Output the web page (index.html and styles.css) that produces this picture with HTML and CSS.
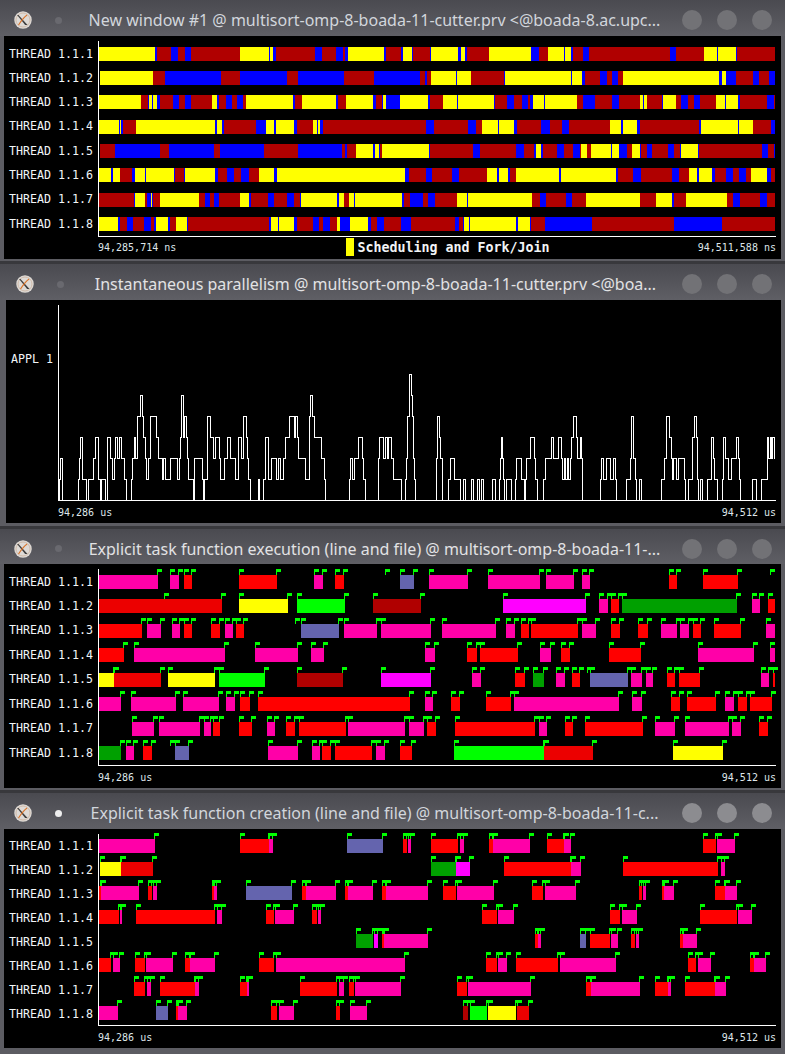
FILE: index.html
```html
<!doctype html>
<html lang="en">

<head>
    <meta charset="utf-8">
    <title>Paraver timelines</title>
    <link rel="stylesheet" href="styles.css">
</head>

<body>

    <section class="window win-first">
        <header class="titlebar">
            <svg class="x-icon" viewBox="0 0 20 20"><circle cx="10" cy="10" r="9.7" fill="#dedad6"/><circle cx="10" cy="10" r="7.8" fill="none" stroke="#cdb5a4" stroke-width="1"/><path d="M5 4.5 L15 15.5 H12.4 L3.4 4.5 Z" fill="#3d3d3d"/><path d="M14.5 4.5 C11 7 8 11 5 15.5" fill="none" stroke="#d9762e" stroke-width="1.3"/></svg>
            <span class="dot"></span>
            <h1 class="title">New window #1 @ multisort-omp-8-boada-11-cutter.prv &lt;@boada-8.ac.upc...</h1>
            <div class="buttons"><span></span><span></span><span></span></div>
        </header>
        <div class="canvas">
            <div class="labels">
                <span>THREAD 1.1.1</span><span>THREAD 1.1.2</span><span>THREAD 1.1.3</span><span>THREAD 1.1.4</span>
                <span>THREAD 1.1.5</span><span>THREAD 1.1.6</span><span>THREAD 1.1.7</span><span>THREAD 1.1.8</span>
            </div>
            <svg class="plot" id="states" width="683" height="201"></svg>
            <div class="axis-text">
                <span>94,285,714 ns</span>
                <span class="legend"><i></i><b>Scheduling and Fork/Join</b></span>
                <span>94,511,588 ns</span>
            </div>
        </div>
    </section>

    <section class="window win-second">
        <header class="titlebar">
            <svg class="x-icon" viewBox="0 0 20 20"><circle cx="10" cy="10" r="9.7" fill="#dedad6"/><circle cx="10" cy="10" r="7.8" fill="none" stroke="#cdb5a4" stroke-width="1"/><path d="M5 4.5 L15 15.5 H12.4 L3.4 4.5 Z" fill="#3d3d3d"/><path d="M14.5 4.5 C11 7 8 11 5 15.5" fill="none" stroke="#d9762e" stroke-width="1.3"/></svg>
            <span class="dot"></span>
            <h1 class="title">Instantaneous parallelism @ multisort-omp-8-boada-11-cutter.prv &lt;@boa...</h1>
            <div class="buttons"><span></span><span></span><span></span></div>
        </header>
        <div class="canvas canvas-appl">
            <div class="labels labels-appl"><span>APPL 1</span></div>
            <svg class="plot" id="parallelism" width="723" height="201"></svg>
            <div class="axis-text">
                <span>94,286 us</span>
                <span>94,512 us</span>
            </div>
        </div>
    </section>

    <section class="window win-third">
        <header class="titlebar">
            <svg class="x-icon" viewBox="0 0 20 20"><circle cx="10" cy="10" r="9.7" fill="#dedad6"/><circle cx="10" cy="10" r="7.8" fill="none" stroke="#cdb5a4" stroke-width="1"/><path d="M5 4.5 L15 15.5 H12.4 L3.4 4.5 Z" fill="#3d3d3d"/><path d="M14.5 4.5 C11 7 8 11 5 15.5" fill="none" stroke="#d9762e" stroke-width="1.3"/></svg>
            <span class="dot"></span>
            <h1 class="title">Explicit task function execution (line and file) @ multisort-omp-8-boada-11-...</h1>
            <div class="buttons"><span></span><span></span><span></span></div>
        </header>
        <div class="canvas">
            <div class="labels labels-wide">
                <span>THREAD 1.1.1</span><span>THREAD 1.1.2</span><span>THREAD 1.1.3</span><span>THREAD 1.1.4</span>
                <span>THREAD 1.1.5</span><span>THREAD 1.1.6</span><span>THREAD 1.1.7</span><span>THREAD 1.1.8</span>
            </div>
            <svg class="plot" id="execution" width="683" height="202"></svg>
            <div class="axis-text">
                <span>94,286 us</span>
                <span>94,512 us</span>
            </div>
        </div>
    </section>

    <section class="window win-fourth">
        <header class="titlebar">
            <svg class="x-icon" viewBox="0 0 20 20"><circle cx="10" cy="10" r="9.7" fill="#dedad6"/><circle cx="10" cy="10" r="7.8" fill="none" stroke="#cdb5a4" stroke-width="1"/><path d="M5 4.5 L15 15.5 H12.4 L3.4 4.5 Z" fill="#3d3d3d"/><path d="M14.5 4.5 C11 7 8 11 5 15.5" fill="none" stroke="#d9762e" stroke-width="1.3"/></svg>
            <span class="dot"></span>
            <h1 class="title">Explicit task function creation (line and file) @ multisort-omp-8-boada-11-c...</h1>
            <div class="buttons"><span></span><span></span><span></span></div>
        </header>
        <div class="canvas">
            <div class="labels labels-tight">
                <span>THREAD 1.1.1</span><span>THREAD 1.1.2</span><span>THREAD 1.1.3</span><span>THREAD 1.1.4</span>
                <span>THREAD 1.1.5</span><span>THREAD 1.1.6</span><span>THREAD 1.1.7</span><span>THREAD 1.1.8</span>
            </div>
            <svg class="plot" id="creation" width="683" height="197"></svg>
            <div class="axis-text">
                <span>94,286 us</span>
                <span>94,512 us</span>
            </div>
        </div>
    </section>

    <script src="script.js"></script>

</body>

</html>
```

FILE: styles.css
```css
body {
    display: flex;
    flex-direction: column;
    gap: 3px;
    height: 1054px;
    margin: 0;
    overflow: hidden;
    background-color: #38383c;
    font-family: "DejaVu Sans Mono", monospace;
}

.window {
    display: flex;
    flex-direction: column;
    background-color: #5c5c62;
}

.win-first {
    height: 261px;
}

.win-second {
    height: 262px;
}

.win-third {
    height: 261px;
}

.win-fourth {
    height: 261px;
}

.titlebar {
    display: flex;
    align-items: center;
    flex: none;
    height: 36px;
    box-sizing: border-box;
    padding: 4px 13px 0 14px;
    background: linear-gradient(#4a4a50, #5f5f65);
}

.win-second .titlebar {
    padding-left: 16px;
}

.win-third .titlebar {
    height: 35px;
}

.x-icon {
    width: 18px;
    height: 18px;
    flex: none;
}

.dot {
    flex: none;
    width: 7px;
    height: 7px;
    margin-left: 23px;
    border-radius: 50%;
    background-color: #69696f;
}

.win-fourth .dot {
    background-color: #eeeeee;
}

.title {
    flex: 1;
    margin: 0 0 0 5px;
    overflow: hidden;
    font-family: "Noto Sans", sans-serif;
    font-size: 16px;
    font-weight: 400;
    line-height: 22px;
    color: #e2e2e4;
    text-align: center;
    white-space: nowrap;
}

.win-first .title,
.win-fourth .title {
    color: #d2d6dc;
}

.buttons {
    display: flex;
    gap: 15px;
    flex: none;
}

.buttons span {
    width: 20px;
    height: 20px;
    border-radius: 50%;
    background-color: #727276;
}

.win-fourth .buttons span {
    background-color: #8c8c90;
}

.canvas {
    display: grid;
    grid-template-columns: 94px 1fr;
    grid-template-rows: auto 22px;
    margin: 0 4px;
    background-color: #000;
    color: #f2f6f8;
}

.canvas-appl {
    grid-template-columns: 52px 1fr;
    margin-left: 6px;
}

.labels {
    display: flex;
    flex-direction: column;
    padding: 5.5px 0 0 5px;
    font-size: 11.65px;
    line-height: 24.29px;
    white-space: nowrap;
}

.labels-wide {
    line-height: 24.43px;
}

.labels-tight {
    padding-top: 5px;
    line-height: 24px;
}

.labels-appl {
    padding-top: 47px;
}

.plot {
    display: block;
    shape-rendering: crispEdges;
}

.axis-text {
    display: flex;
    align-items: center;
    justify-content: space-between;
    grid-column: 2;
    padding-right: 5px;
    font-size: 10px;
    color: #dfe6ea;
}

.win-first .axis-text {
    padding-bottom: 2px;
}

.legend {
    display: flex;
    align-items: center;
    gap: 3px;
    margin-left: 22px;
    font-size: 13.3px;
    color: #f2f4f6;
}

.legend i {
    display: block;
    width: 8px;
    height: 18px;
    background-color: #ffff00;
}
```

FILE: script.js
```js
// trace data is in 1/3 px page coordinates, read off the timelines
var colors = {
    Y: '#ffff00', R: '#b00000', B: '#0000ff',
    p: '#ff00a8', r: '#ff0000', d: '#ec0000',
    g: '#00ff00', G: '#00a000', s: '#6464ae', M: '#ff00ff'
};

var stateRows = [
    'Y297 B465 R471 B513 R534 B555 R573 Y720 B807 Y810 B819 R828 B945 R966 B1008 R1029 B1035 Y1044 B1152 R1158 B1203 Y1209 B1236 R1239 B1290 Y1293 B1374 Y1383 B1395 R1401 Y1467 B1593 R1617 Y1644 B1692 Y1695 B1713 R1719 B1749 R1767 B2010 R2028 Y2112 B2151 Y2154 B2208 R2211',
    'Y300 R459 B495 R663 B720 R861 B894 R1032 B1122 R1260 B1275 R1281 Y1293 B1368 Y1371 R1413 B1512 Y1515 B1713 Y1716 B1746 R1755 B1800 R1821 B1836 R1854 Y1869 B2157 Y2166 B2178 R2208 B2259 R2277 B2307',
    'Y297 R423 B444 Y447 B456 Y459 B471 R480 B519 R537 B555 R573 Y636 B651 R657 B678 R696 B711 R729 Y738 B879 R885 Y906 B1008 R1014 Y1038 B1119 R1128 B1146 Y1149 B1158 Y1200 B1284 R1290 Y1329 B1371 Y1374 B1482 R1485 B1521 R1542 B1566 R1584 B1590 Y1599 B1632 Y1635 R1731 B1749 R1785 B1836 R1857 Y1920 B1929 Y1933 R1941 B1986 Y1989 R2027 B2043 R2064 B2082 R2100 Y2148 B2175 Y2178 B2214 R2220 B2301 R2322',
    'Y297 B357 Y360 B363 R369 Y408 B645 Y651 B666 R672 B768 Y798 B822 Y828 B882 R891 Y939 B951 Y954 B960 R969 B1278 R1302 B1404 R1428 Y1446 B1494 Y1497 B1542 R1551 B1623 R1650 B1686 R1707 Y1830 B1863 Y1869 B1911 R1920 B2097 Y2103 B2214 Y2217 R2259 B2313',
    'R300 B345 R480 B507 R642 B660 R792 B894 R1026 B1035 R1041 Y1068 B1119 Y1125 B1137 R1140 Y1146 B1287 R1290 B1419 R1440 B1548 R1572 B1602 Y1608 B1623 R1629 B1671 R1692 B1719 R1740 Y1743 R1761 Y1773 B1833 Y1836 B1857 R1881 Y1896 B1920 R1923 B1941 R1956 B2004 R2022 B2040 Y2043 B2094 R2097 B2286 R2304 B2322',
    'Y297 B333 Y339 R360 B396 Y405 B435 Y438 B522 R525 B552 Y555 B645 R654 B681 R702 B723 R747 Y777 B822 Y831 B1215 R1227 B1278 R1296 B1356 R1377 Y1461 B1491 Y1497 B1524 R1530 Y1548 B1677 Y1683 B1848 R1854 B1899 R1923 B2016 R2037 Y2067 B2091 Y2097 B2136 R2145 B2178 R2199 B2217 R2238 Y2253 B2301 R2313',
    'R297 B402 Y405 R435 B441 Y453 B456 R459 Y480 R597 B615 R630 B642 R657 Y720 B747 R753 B804 R822 B861 R882 B900 Y903 B1011 Y1017 R1032 Y1047 B1062 Y1065 B1206 R1212 B1230 R1269 B1284 R1305 Y1370 B1401 Y1404 R1596 B1620 R1638 B1698 R1716 Y1758 R1920 Y1968 B2016 R2022 Y2058 R2181 B2199 R2220 B2280 R2301',
    'Y297 B354 R360 B381 R399 B432 R453 B462 Y468 B504 R510 Y528 B561 R564 B807 Y813 B834 Y837 B882 R891 B939 R957 B969 R990 Y1011 B1020 Y1050 B1104 R1113 B1131 R1152 B1203 R1233 B1365 R1377 B1389 Y1392 B1407 Y1410 B1548 Y1554 B1590 R1593 B1635 R1776 B2022 R2166'
];

var executionRows = [
    'p297-474 p510-537 r552-576 r717-831 p942-969 r1005-1032 f1155 s1200-1242 p1287-1404 p1464-1620 p1638-1722 p1746-1770 r2007-2031 r2109-2214 f2325',
    'd297-666 f492 Y717-864 g891-1035 R1119-1263 M1509-1758 p1797-1824 r1833-1857 G1866-2211 p2256-2280 r2304-2325',
    'r297-426 p441-483 p516-540 r552-576 r633-660 p675-699 r708-732 f885 s903-1017 p1032-1131 p1143-1293 p1326-1488 p1518-1545 r1563-1587 r1593-1734 p1746-1788 r1833-1860 r1914-1944 p1983-2031 p2040-2067 r2079-2103 r2142-2223 p2298-2325',
    'r297-372 p402-675 p765-894 p933-972 p1275-1305 r1401-1431 r1440-1554 p1620-1653 r1683-1710 r1827-1923 p2094-2262 p2310-2325',
    'Y297-342 d342-483 Y504-645 g657-795 R891-1029 M1143-1293 p1416-1443 r1545-1575 G1599-1632 p1668-1695 r1716-1740 f1761 s1770-1884 p1893-1926 p1938-1959 r2001-2025 r2037-2100 p2283-2307 r2319-2325',
    'p297-363 p393-528 p549-657 p678-705 r720-750 r774-1230 p1275-1299 r1353-1380 r1458-1533 p1542-1857 p1896-1926 r2013-2040 r2061-2148 p2175-2202 r2214-2241 r2250-2316',
    'p396-462 p477-600 p612-633 r639-660 r717-756 p801-825 r858-885 r897-1038 p1044-1215 p1227-1272 r1281-1308 r1365-1605 p1617-1641 r1695-1719 r1755-1929 p1965-2025 p2055-2187 p2196-2223 r2277-2304',
    'G297-363 p378-402 r429-456 f510 s525-567 p804-894 p936-960 r966-993 r1005-1116 p1128-1155 r1200-1236 g1362-1632 d1632-1779 Y2019-2169'
];

var creationRows = [
    'p297-465 r720-807 p807-819 s1041-1149 r1209-1221 p1224-1233 r1293-1374 p1380-1392 r1467-1479 p1479-1590 r1641-1692 p1692-1713 r2109-2148 p2151-2205',
    'Y300-363 d363-459 G1293-1368 M1368-1410 r1512-1713 p1713-1743 r1869-2154 p2163-2175',
    'r297-303 p303-417 r444-456 p459-471 r636-642 p642-651 s738-876 r906-918 p918-1008 r1035-1044 p1044-1119 r1146-1158 p1158-1284 r1329-1368 p1371-1482 r1596-1629 p1635-1728 r1917-1926 p1929-1938 r1986-1992 p1992-2022 r2145-2175 p2175-2211',
    'r297-357 p360-366 r408-645 p651-666 r798-822 p825-882 r936-951 p954-963 r1446-1491 p1494-1542 r1830-1860 p1866-1911 r2100-2211 p2214-2256',
    'G1068-1119 M1122-1134 r1146-1152 p1152-1284 r1605-1614 p1614-1623 s1740-1758 r1770-1830 p1833-1854 r1893-1905 p1908-1917 r2040-2049 p2049-2091',
    'r297-333 p339-360 r405-435 p438-519 r555-570 p570-645 r777-822 p828-1215 r1458-1491 p1494-1521 r1548-1674 p1680-1848 r2064-2088 p2094-2133 r2250-2262 p2262-2298',
    'r402-435 p441-453 r480-585 p585-597 r720-741 p741-747 r900-1011 p1017-1032 r1047-1062 p1065-1203 r1371-1401 p1404-1593 r1758-1773 p1773-1920 r1965-2004 p2004-2013 r2055-2145 p2145-2178',
    'p297-354 s468-504 r528-534 p534-561 r813-831 p837-882 r1008-1020 p1050-1101 R1389-1404 g1410-1461 Y1464-1548 d1551-1587'
];

// x:level pairs, level 0 is the axis
var parallelism = '178:1 181:2 185:0 235:1 238:2 241:3 247:1 257:0 265:1 280:2 284:3 295:1 301:0 304:1 316:0 320:1 322:3 331:2 337:1 341:2 346:3 352:2 358:3 364:2 373:1 377:0 394:1 397:2 403:3 406:2 412:4 421:5 426:4 430:3 434:2 437:1 445:2 449:4 469:3 475:2 487:1 490:2 496:1 511:2 532:1 537:2 540:3 544:5 549:3 551:4 557:3 561:2 564:1 578:0 581:2 605:1 610:0 613:1 622:4 631:3 640:2 645:3 657:2 661:1 673:2 682:3 691:2 706:1 715:3 723:2 730:4 739:3 742:2 745:1 751:0 775:1 778:0 790:1 796:3 803:1 814:2 827:1 835:2 840:1 850:2 856:3 868:4 881:3 884:4 890:3 893:2 916:1 928:4 931:5 937:4 941:3 964:2 973:1 976:0 1048:1 1051:2 1057:1 1063:2 1075:3 1087:2 1090:1 1096:0 1135:2 1138:3 1150:2 1156:3 1162:2 1165:3 1174:2 1180:1 1202:0 1214:1 1217:2 1222:4 1228:6 1232:5 1235:4 1238:2 1241:1 1244:0 1309:2 1312:4 1318:3 1321:2 1326:0 1345:1 1350:2 1362:1 1379:0 1390:1 1395:0 1414:1 1418:0 1432:1 1436:0 1442:1 1450:0 1475:1 1486:0 1496:1 1499:2 1502:3 1507:2 1510:1 1513:0 1519:1 1532:0 1546:1 1549:2 1564:1 1571:0 1575:1 1578:2 1591:3 1602:2 1606:1 1612:0 1630:1 1636:2 1653:3 1658:2 1675:3 1684:2 1687:1 1693:2 1696:1 1702:2 1705:1 1711:2 1714:3 1720:4 1729:3 1732:2 1740:3 1744:2 1747:0 1801:1 1804:2 1810:1 1819:2 1831:1 1840:2 1846:1 1849:0 1879:1 1891:2 1894:4 1900:2 1905:1 1908:0 1916:1 1922:0 1984:1 1993:2 1999:4 2008:3 2014:2 2017:1 2020:2 2029:1 2035:2 2053:1 2056:0 2065:1 2076:3 2083:4 2087:3 2090:1 2095:0 2100:1 2105:0 2122:1 2134:3 2140:2 2143:1 2150:0 2167:1 2170:3 2174:2 2185:1 2192:2 2207:3 2215:2 2218:1 2220:0 2255:1 2267:0 2282:1 2300:3 2305:2 2311:3 2314:2 2317:3 2323:2';

function addRect(svg, x, y, w, h, fill) {
    var r = document.createElementNS('http://www.w3.org/2000/svg', 'rect');
    r.setAttribute('x', x);
    r.setAttribute('y', y);
    r.setAttribute('width', w);
    r.setAttribute('height', h);
    r.setAttribute('fill', fill);
    svg.appendChild(r);
}

function drawAxes(svg, originX, top, bottom) {
    addRect(svg, 0, top, 1, bottom - top + 1, '#fff');
    addRect(svg, 0, bottom, 776 - originX, 1, '#fff');
}

function drawStates(svg, rows, tops) {
    rows.forEach(function (row, i) {
        var runs = row.split(' ');
        runs.forEach(function (run, n) {
            var start = parseInt(run.slice(1));
            var end = n + 1 < runs.length ? parseInt(runs[n + 1].slice(1)) : 2325;
            addRect(svg, start / 3 - 98, tops[i], (end - start) / 3, 14, colors[run[0]]);
        });
    });
}

function addFlag(svg, x3, top) {
    var x = Math.round(x3 / 3) - 98;
    addRect(svg, x, top - 6, 1, 6, '#00ff00');
    addRect(svg, x, top - 6, 5, 3, '#00ff00');
}

function drawTasks(svg, rows, tops) {
    rows.forEach(function (row, i) {
        row.split(' ').forEach(function (bar) {
            var parts = bar.slice(1).split('-');
            var start = parseInt(parts[0]);
            if (bar[0] == 'f') {
                addFlag(svg, Math.min(start, 2310), tops[i]);
                return;
            }
            var end = parseInt(parts[1]);
            addRect(svg, start / 3 - 98, tops[i], (end - start) / 3, 14, colors[bar[0]]);
            if (start > 297) {
                addFlag(svg, start, tops[i]);
            }
            if (end < 2325) {
                addFlag(svg, end - 3, tops[i]);
            }
        });
    });
}

function drawParallelism(svg) {
    var points = ['0.5,200.5'];
    var level = 0;
    parallelism.split(' ').forEach(function (step) {
        var parts = step.split(':');
        var x = Math.round(parts[0] / 3) - 58 + 0.5;
        points.push(x + ',' + (200.5 - level * 21));
        level = parseInt(parts[1]);
        points.push(x + ',' + (200.5 - level * 21));
    });
    var line = document.createElementNS('http://www.w3.org/2000/svg', 'polyline');
    line.setAttribute('points', points.join(' '));
    line.setAttribute('fill', 'none');
    line.setAttribute('stroke', '#fff');
    line.setAttribute('stroke-width', '1');
    svg.appendChild(line);
}

var states = document.getElementById('states');
drawStates(states, stateRows, [11, 35, 59, 84, 108, 132, 157, 181]);
drawAxes(states, 98, 5, 200);

var parallel = document.getElementById('parallelism');
drawParallelism(parallel);
drawAxes(parallel, 58, 5, 200);

var execution = document.getElementById('execution');
drawTasks(execution, executionRows, [11, 35, 60, 84, 109, 133, 158, 182]);
drawAxes(execution, 98, 5, 201);

var creation = document.getElementById('creation');
drawTasks(creation, creationRows, [10, 33, 57, 81, 105, 129, 153, 177]);
drawAxes(creation, 98, 5, 196);
```
